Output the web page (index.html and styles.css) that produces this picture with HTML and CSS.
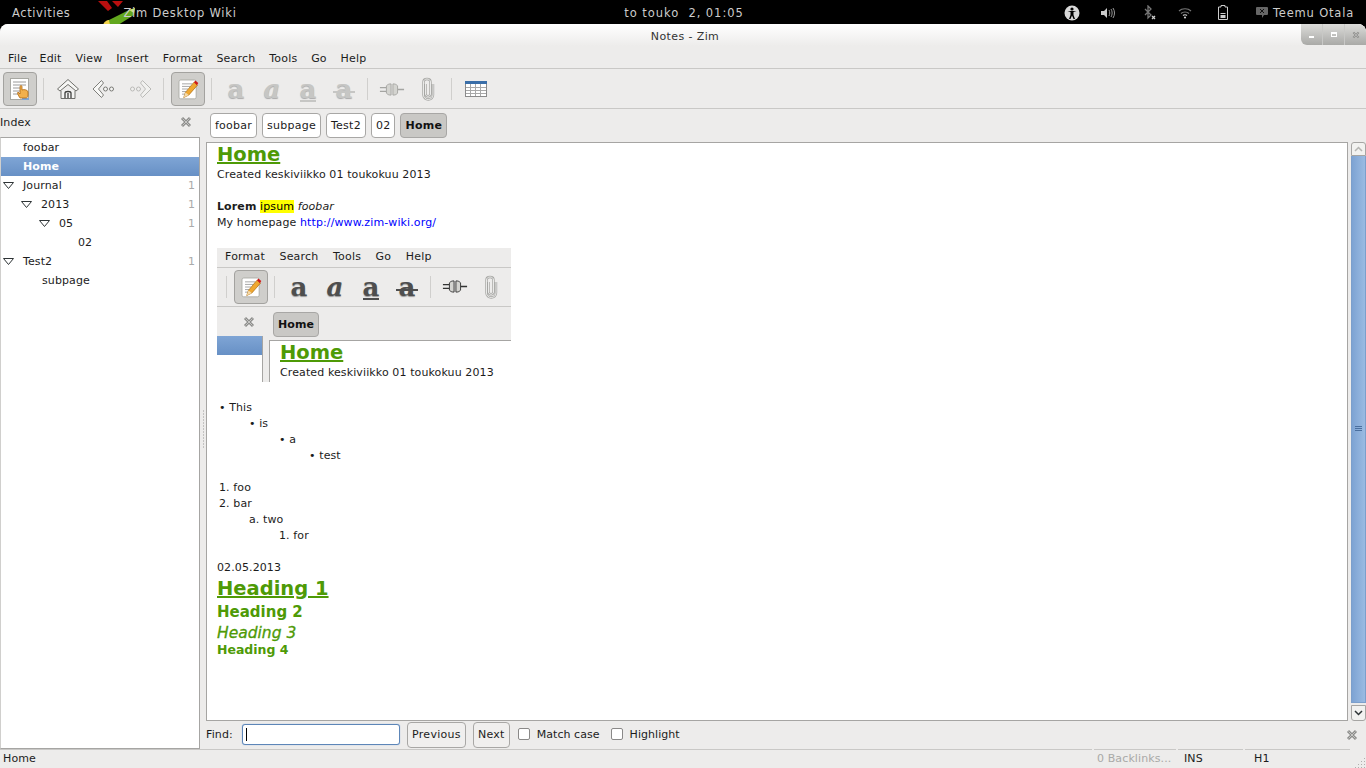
FILE: index.html
```html
<!DOCTYPE html>
<html lang="en">

<head>
    <meta charset="UTF-8">
    <title>Notes - Zim</title>
    <link rel="stylesheet" href="styles.css">
</head>

<body>
    <svg class="defs" width="0" height="0">
        <symbol id="i-edit" viewBox="0 0 28 28">
            <rect x="3.500" y="3.500" width="20" height="22" rx="2" fill="#fff" stroke="#a9a9a3"/>
            <path d="M7 8h12M7 11h10M7 14h7M7 17h5M7 20h4" stroke="#9a9a9a"/>
            <path d="M9 24l2-6L21 6l4 3.500L15 21z" fill="#f0a830" stroke="#a86a10" stroke-width=".8"/>
            <path d="M9 24l2-6 4 3z" fill="#f4d9a8"/>
            <path d="M21 6l1.500-2 3.500 3-1.500 2.500z" fill="#d01818"/>
        </symbol>
        <symbol id="i-plug" viewBox="0 0 28 16">
            <path d="M1 6h7M1 10h7M20 8h7" stroke="currentColor" stroke-width="1.500"/>
            <path d="M8 4c2-2 3-2 5-2v12c-2 0-3 0-5-2z" fill="#d4d4d0" stroke="currentColor"/>
            <path d="M20 4c-2-2-3-2-5-2v12c2 0 3 0 5-2z" fill="#d4d4d0" stroke="currentColor"/>
        </symbol>
        <symbol id="i-clip" viewBox="0 0 16 24">
            <path d="M5.500 7v10c0 3 5 3 5 0V5c0-4-7-4-7 0v13c0 6 9.500 6 9.500 0V7" fill="none" stroke="currentColor" stroke-width="2.400"/>
            <path d="M5.500 7v10c0 3 5 3 5 0V5c0-4-7-4-7 0v13c0 6 9.500 6 9.500 0V7" fill="none" stroke="#f2f2f0" stroke-width=".9"/>
        </symbol>
        <symbol id="i-close" viewBox="0 0 12 12">
            <path d="M2 2l8 8M10 2l-8 8" stroke="#8d8d8b" stroke-width="3"/>
            <path d="M2.500 2.500l7 7M9.500 2.500l-7 7" stroke="#c4c4c2"/>
        </symbol>
        <symbol id="i-down" viewBox="0 0 14 10">
            <path d="M1.500 1.500h10l-5 6z" fill="#fff" stroke="#2e3436"/>
        </symbol>
    </svg>

    <div class="shell">
        <div class="shell-left">
            <span class="activities">Activities</span>
            <span class="app-menu">
                <svg class="app-logo" width="46" height="24" viewBox="0 0 46 24">
                    <path d="M2 0l10 10 4-3-5-7zM16 0l6 6 5-6z" fill="#b80f0f"/>
                    <path d="M7 24c1-3 3-5 7-5l3 5z" fill="#f1d24a"/>
                    <path d="M14 24l-1-5L33 9l6-2-1 7-16 10z" fill="#62a81e"/>
                    <path d="M33 9l6-2-1 5z" fill="#c6e07c"/>
                </svg>
                <span class="app-name">Zim Desktop Wiki</span>
            </span>
        </div>
        <div class="clock">to touko  2, 01:05</div>
        <div class="shell-right">
            <svg width="16" height="16" viewBox="0 0 16 16" class="tray-a">
                <circle cx="8" cy="8" r="7.500" fill="#d8d8d8"/>
                <circle cx="8" cy="4" r="1.600" fill="#000"/>
                <path d="M3.500 6l3 1v3L5 14h1.500L8 10.500 9.500 14H11L9.500 10V7l3-1z" fill="#000"/>
            </svg>
            <svg width="14" height="12" viewBox="0 0 14 12" class="tray-b">
                <path d="M0 4h3l3-3v10L3 8H0z" fill="#ccc"/>
                <path d="M8 3c1 2 1 4 0 6M10 2c1.500 2 1.500 6 0 8M12 1c2 3 2 7 0 10" fill="none" stroke="#999"/>
            </svg>
            <svg width="12" height="16" viewBox="0 0 12 16" class="tray-c">
                <path d="M1 4l6 6-3 3V1l3 3-6 6" fill="none" stroke="#777" stroke-width="1.300"/>
                <path d="M8 11l3 3M11 11l-3 3" stroke="#ccc" stroke-width="1.300"/>
            </svg>
            <svg width="14" height="12" viewBox="0 0 14 12" class="tray-d">
                <path d="M1 4c3-3 9-3 12 0M3 6.500c2-2 6-2 8 0" fill="none" stroke="#777" stroke-width="1.200"/>
                <path d="M5 8.500c1-1 3-1 4 0" fill="none" stroke="#ccc" stroke-width="1.200"/>
                <circle cx="7" cy="10.500" r="1.100" fill="#ccc"/>
            </svg>
            <svg width="10" height="15" viewBox="0 0 10 15" class="tray-e">
                <path d="M3 .5h4v1.500h2.500v12.500h-9V2H3z" fill="none" stroke="#ccc"/>
                <path d="M2.500 8h5v1h-5zM2.500 10h5v3h-5z" fill="#ccc"/>
            </svg>
            <svg width="12" height="11" viewBox="0 0 12 11" class="tray-f">
                <path d="M1 0h10a1 1 0 0 1 1 1v6a1 1 0 0 1-1 1H8l-2 3V8H1a1 1 0 0 1-1-1V1a1 1 0 0 1 1-1z" fill="#666"/>
                <path d="M4 2l4 4M8 2L4 6" stroke="#111"/>
            </svg>
            <span class="user">Teemu Otala</span>
        </div>
    </div>

    <div class="window">
        <div class="titlebar">
            Notes - Zim
            <div class="win-buttons">
                <span class="win-btn"><i class="min"></i></span>
                <span class="win-btn"><i class="max"></i></span>
                <span class="win-btn"><svg width="8" height="8"><use href="#i-close"/></svg></span>
            </div>
        </div>

        <div class="menubar">
            <span>File</span><span>Edit</span><span>View</span><span>Insert</span><span>Format</span><span>Search</span><span>Tools</span><span>Go</span><span>Help</span>
        </div>

        <div class="toolbar">
            <div class="tool on">
                <svg width="26" height="26" viewBox="0 0 26 26">
                    <rect x="3.500" y="2.500" width="18" height="21" fill="#fff" stroke="#a8a8a2"/>
                    <path d="M6 6h13M6 9h13M6 12h9M6 15h7M6 18h6" stroke="#9a9a9a"/>
                    <path d="M15 24h7v-2h-7z" fill="#7ea6d8"/>
                    <path d="M13 22c-2-3-3-5-2-6l2 2v-7c0-2 2-2 2 0v3c2-1 6 0 6 2v3c0 2-1 3-2 3z" fill="#f2b04c" stroke="#b06a14" stroke-width=".8"/>
                </svg>
            </div>
            <span class="sep"></span>
            <div class="tool">
                <svg width="22" height="22" viewBox="0 0 22 22">
                    <path d="M.5 11L11 1.500 21.500 11 19 13l-8-6.500L3 13z" fill="#f6f6f4" stroke="#6e6e6a"/>
                    <path d="M4 12.500v8h14v-8" fill="#f4f4f2" stroke="#6e6e6a"/>
                    <path d="M8 20v-5c0-2 6-2 6 0v5M11 15v5" fill="none" stroke="#3f3f3d" stroke-width="1.300"/>
                </svg>
            </div>
            <div class="tool">
                <svg width="24" height="20" viewBox="0 0 24 20">
                    <path d="M9.500 1.500L1 10l8.500 8.500 2-2.500L6.500 10l5-6z" fill="#f8f8f6" stroke="#7e7e7a"/>
                    <circle cx="13.500" cy="10" r="2" fill="#f4f4f2" stroke="#7a7a76"/>
                    <circle cx="19.500" cy="10" r="2" fill="#f4f4f2" stroke="#7a7a76"/>
                </svg>
            </div>
            <div class="tool faded">
                <svg width="24" height="20" viewBox="0 0 24 20">
                    <path d="M14.500 1.500L23 10l-8.500 8.500-2-2.500 5-6-5-6z" fill="#f8f8f6" stroke="#7e7e7a"/>
                    <circle cx="10.500" cy="10" r="2" fill="#f4f4f2" stroke="#7a7a76"/>
                    <circle cx="4.500" cy="10" r="2" fill="#f4f4f2" stroke="#7a7a76"/>
                </svg>
            </div>
            <span class="sep"></span>
            <div class="tool on"><svg width="24" height="26"><use href="#i-edit"/></svg></div>
            <span class="sep"></span>
            <div class="tool"><span class="fmt off">a</span></div>
            <div class="tool"><span class="fmt off ital">a</span></div>
            <div class="tool"><span class="fmt off under">a</span></div>
            <div class="tool"><span class="fmt off strike">a</span></div>
            <span class="sep"></span>
            <div class="tool off-icon"><svg width="26" height="15"><use href="#i-plug"/></svg></div>
            <div class="tool off-icon"><svg width="16" height="24"><use href="#i-clip"/></svg></div>
            <span class="sep"></span>
            <div class="tool">
                <svg width="24" height="18" viewBox="0 0 24 18">
                    <rect x="1.500" y="1.500" width="21" height="15" fill="#fff" stroke="#8a8a8a"/>
                    <rect x="1" y="1" width="22" height="3" fill="#3a6ea8"/>
                    <path d="M2 7.500h20M2 10.500h20M2 13.500h20M6.500 4v12M11.500 4v12M16.500 4v12" stroke="#a8a8a8"/>
                </svg>
            </div>
        </div>

        <div class="main">
            <div class="side">
                <div class="side-head">
                    <span>Index</span>
                    <svg width="12" height="12"><use href="#i-close"/></svg>
                </div>
                <div class="tree">
                    <div class="row"><span class="name d1">foobar</span></div>
                    <div class="row sel"><span class="name d1">Home</span></div>
                    <div class="row"><svg class="arrow d0" width="14" height="10"><use href="#i-down"/></svg><span class="name">Journal</span><span class="count">1</span></div>
                    <div class="row"><svg class="arrow d2" width="14" height="10"><use href="#i-down"/></svg><span class="name">2013</span><span class="count">1</span></div>
                    <div class="row"><svg class="arrow d3" width="14" height="10"><use href="#i-down"/></svg><span class="name">05</span><span class="count">1</span></div>
                    <div class="row"><span class="name d4">02</span></div>
                    <div class="row"><svg class="arrow d0" width="14" height="10"><use href="#i-down"/></svg><span class="name">Test2</span><span class="count">1</span></div>
                    <div class="row"><span class="name d5">subpage</span></div>
                </div>
            </div>
            <div class="handle"></div>
            <div class="right">
                <div class="tabs">
                    <span class="tab">foobar</span>
                    <span class="tab">subpage</span>
                    <span class="tab">Test2</span>
                    <span class="tab">02</span>
                    <span class="tab cur">Home</span>
                </div>
                <div class="pane">
                    <div class="editor">
                        <h1 class="h-page">Home</h1>
                        <p>Created keskiviikko 01 toukokuu 2013</p>
                        <p>&nbsp;</p>
                        <p><b>Lorem</b> <mark>ipsum</mark> <em>foobar</em></p>
                        <p>My homepage <a href="#">http://www.zim-wiki.org/</a></p>

                        <div class="shot">
                            <div class="shot-menu"><span>Format</span><span>Search</span><span>Tools</span><span>Go</span><span>Help</span></div>
                            <div class="shot-tools">
                                <span class="sep shot-sep"></span>
                                <div class="tool on"><svg width="24" height="26"><use href="#i-edit"/></svg></div>
                                <span class="sep"></span>
                                <div class="tool"><span class="fmt">a</span></div>
                                <div class="tool"><span class="fmt ital">a</span></div>
                                <div class="tool"><span class="fmt under">a</span></div>
                                <div class="tool"><span class="fmt strike">a</span></div>
                                <span class="sep"></span>
                                <div class="tool dark-icon"><svg width="26" height="15"><use href="#i-plug"/></svg></div>
                                <div class="tool off-icon"><svg width="16" height="24"><use href="#i-clip"/></svg></div>
                            </div>
                            <div class="shot-tabs">
                                <svg class="shot-close" width="12" height="12"><use href="#i-close"/></svg>
                                <span class="tab cur">Home</span>
                            </div>
                            <div class="shot-body">
                                <div class="shot-side"><div class="shot-sel"></div></div>
                                <div class="shot-page">
                                    <h1 class="h-page">Home</h1>
                                    <p>Created keskiviikko 01 toukokuu 2013</p>
                                </div>
                            </div>
                        </div>

                        <p>&nbsp;</p>
                        <p class="li0">• This</p>
                        <p class="li1">• is</p>
                        <p class="li2">• a</p>
                        <p class="li3">• test</p>
                        <p>&nbsp;</p>
                        <p class="num0">1. foo</p>
                        <p class="num0">2. bar</p>
                        <p class="num1">a. two</p>
                        <p class="num2">1. for</p>
                        <p>&nbsp;</p>
                        <p>02.05.2013</p>
                        <h1 class="h1">Heading 1</h1>
                        <h2 class="h2">Heading 2</h2>
                        <h3 class="h3">Heading 3</h3>
                        <h4 class="h4">Heading 4</h4>
                    </div>
                    <div class="scrollbar">
                        <span class="sb-btn">
                            <svg width="9" height="6" viewBox="0 0 9 6"><path d="M1 5l3.500-3.500L8 5" fill="none" stroke="#b5b5b2" stroke-width="1.500"/></svg>
                        </span>
                        <div class="sb-thumb"><i></i><i></i><i></i></div>
                        <span class="sb-btn down">
                            <svg width="9" height="6" viewBox="0 0 9 6"><path d="M1 1l3.500 3.500L8 1" fill="none" stroke="#2e3436" stroke-width="1.500"/></svg>
                        </span>
                    </div>
                </div>
                <div class="findbar">
                    <span class="find-label">Find:</span>
                    <span class="find-input"><i></i></span>
                    <span class="btn">Previous</span>
                    <span class="btn">Next</span>
                    <span class="check"></span><span class="check-label">Match case</span>
                    <span class="check"></span><span class="check-label">Highlight</span>
                    <svg class="find-close" width="12" height="12"><use href="#i-close"/></svg>
                </div>
            </div>
        </div>

        <div class="statusbar">
            <span class="st st-page">Home</span>
            <span class="st st-back">0 Backlinks...</span>
            <span class="st st-ins">INS</span>
            <span class="st st-style">H1</span>
            <svg class="grip" width="11" height="11" viewBox="0 0 11 11">
                <path d="M9 1h1v1H9zM6 4h1v1H6zM9 4h1v1H9zM3 7h1v1H3zM6 7h1v1H6zM9 7h1v1H9zM0 10h1v1H0zM3 10h1v1H3zM6 10h1v1H6zM9 10h1v1H9z" fill="#b0afad"/>
            </svg>
        </div>
    </div>
</body>

</html>
```

FILE: styles.css
```css
* {
    padding: 0;
    margin: 0;
    box-sizing: border-box;
}

html,
body {
    height: 100%;
    overflow: hidden;
}

body {
    display: flex;
    flex-direction: column;
    background-color: #000;
    font-family: "DejaVu Sans", sans-serif;
    font-size: 11px;
    letter-spacing: .11px;
    color: #1c1c1c;
}

.defs {
    position: absolute;
}

/* shell panel */
.shell {
    display: grid;
    grid-template-columns: 1fr auto 1fr;
    align-items: center;
    flex: none;
    height: 24px;
    padding-top: 1px;
    background-color: #000;
    color: #ccc;
    font-size: 11.5px;
    font-weight: 500;
    letter-spacing: .6px;
}

.shell-left,
.shell-right {
    display: flex;
    align-items: center;
    height: 23px;
}

.activities {
    margin-left: 12px;
}

.app-menu {
    position: relative;
    margin-left: 53px;
    letter-spacing: .75px;
}

.app-name {
    position: relative;
}

.app-logo {
    position: absolute;
    left: -27px;
    top: -5px;
}

.clock {
    margin-left: 2px;
    white-space: pre;
    letter-spacing: .95px;
}

.shell-right {
    justify-content: flex-end;
    padding-right: 12px;
}

.user {
    letter-spacing: .8px;
}

.tray-a {
    margin-right: 21px;
}

.tray-b {
    margin-right: 29px;
}

.tray-c {
    margin-right: 22px;
}

.tray-d {
    margin-right: 26px;
}

.tray-e {
    margin-right: 28px;
}

.tray-f {
    margin-right: 5px;
}

/* window */
.window {
    display: flex;
    flex-direction: column;
    flex: 1;
    min-height: 0;
    border-radius: 8px 8px 0 0;
    background-color: #edeceb;
}

.titlebar {
    position: relative;
    flex: none;
    height: 22px;
    padding-left: 4px;
    line-height: 26px;
    text-align: center;
    border-radius: 8px 8px 0 0;
    background: linear-gradient(#fff, #edeceb);
    color: #333;
    letter-spacing: .4px;
}

.win-buttons {
    position: absolute;
    right: 0;
    top: 0;
    display: flex;
    width: 65px;
    height: 21px;
    border-radius: 0 8px 0 6px;
    overflow: hidden;
    background: linear-gradient(#dcdcda, #a9a9a6);
}

.win-btn {
    display: flex;
    flex: 1;
    align-items: center;
    justify-content: center;
    border-left: 1px solid #c8c8c6;
}

.win-btn:first-child {
    border-left: 0;
}

.win-btn i {
    display: block;
    background-color: #fff;
}

.win-btn .min {
    width: 5px;
    height: 2px;
    margin-top: 5px;
}

.win-btn .max {
    width: 6px;
    height: 5px;
    border: 1px solid #fff;
    border-top-width: 2px;
    background-color: transparent;
}

.menubar {
    display: flex;
    flex: none;
    gap: 13.800px;
    align-items: center;
    height: 23px;
    padding-left: 8px;
    padding-top: 2px;
    border-bottom: 1px solid #c9c8c6;
    letter-spacing: .2px;
}

.menubar span:first-child {
    margin-right: -1.500px;
}

.toolbar {
    display: flex;
    flex: none;
    align-items: center;
    height: 40px;
    padding: 1px 0 0 2px;
    border-bottom: 1px solid #c9c8c6;
}

.tool {
    display: flex;
    flex: none;
    align-items: center;
    justify-content: center;
    width: 36px;
    height: 34px;
}

.tool.on {
    width: 34px;
    margin: 0 1px;
    border: 1px solid #a3a29f;
    border-radius: 4px;
    background-color: #cfcecb;
}

.faded svg {
    opacity: .45;
}

.sep {
    flex: none;
    width: 12px;
    height: 22px;
    background: linear-gradient(#d0cfcd, #d0cfcd) 5px 0 / 1px 100% no-repeat;
}

.fmt {
    position: relative;
    font-family: "DejaVu Serif", serif;
    font-size: 26px;
    font-weight: bold;
    line-height: 22px;
    color: #4e4e4e;
    text-shadow: 0 1px 1px #999;
}

.fmt.off {
    color: #c6c6c4;
    text-shadow: 0 1px 1px #aaa;
}

.fmt.ital {
    font-style: italic;
}

.fmt.under::after,
.fmt.strike::after {
    content: "";
    position: absolute;
    left: 0;
    right: 0;
    height: 2px;
    background-color: currentColor;
}

.fmt.under::after {
    bottom: -2px;
}

.fmt.strike::after {
    left: -3px;
    right: -3px;
    bottom: 7px;
}

.off-icon {
    color: #a5a5a2;
}

.dark-icon {
    color: #333;
}

/* main area */
.main {
    display: flex;
    flex: 1;
    min-height: 0;
}

.side {
    display: flex;
    flex-direction: column;
    flex: none;
    width: 200px;
}

.side-head {
    display: flex;
    flex: none;
    align-items: center;
    justify-content: space-between;
    height: 28px;
    padding: 0 8px 2px 0;
}

.tree {
    flex: 1;
    border: 1px solid #a6a5a3;
    border-left-color: #d0cfcd;
    background-color: #fff;
}

.row {
    display: flex;
    align-items: center;
    height: 19px;
}

.row.sel {
    background: linear-gradient(#7fa5d5, #6790c5);
    color: #fff;
    font-weight: bold;
}

.arrow {
    flex: none;
    margin-right: 7px;
}

.name {
    flex: 1;
}

.count {
    margin-right: 4px;
    color: #aaa;
}

.d0 {
    margin-left: 1px;
}

.d1 {
    margin-left: 22px;
}

.d2 {
    margin-left: 19px;
}

.d3 {
    margin-left: 37px;
}

.d4 {
    margin-left: 77px;
}

.d5 {
    margin-left: 41px;
}

.handle {
    flex: none;
    width: 6px;
    background: radial-gradient(#9a9997 .5px, transparent 1px) center / 3px 3px repeat-y;
    mask-image: linear-gradient(transparent 0, transparent 47%, #000 47%, #000 53%, transparent 53%);
}

.right {
    display: flex;
    flex-direction: column;
    flex: 1;
    min-width: 0;
}

.tabs {
    display: flex;
    flex: none;
    gap: 5px;
    height: 33px;
    padding: 4px 0 0 4px;
    letter-spacing: .25px;
}

.tab {
    height: 25px;
    padding: 0 4px;
    line-height: 23px;
    border: 1px solid #a8a7a5;
    border-radius: 4px;
    background-color: #fff;
}

.tab.cur {
    background-color: #c9c8c5;
    font-weight: bold;
    color: #111;
}

.pane {
    display: flex;
    flex: 1;
    min-height: 0;
}

.editor {
    flex: 1;
    overflow: hidden;
    padding: 1px 0 0 10px;
    border: 1px solid #a6a5a3;
    background-color: #fff;
    line-height: 16px;
}

.editor p {
    height: 16px;
    white-space: pre;
}

.h-page {
    height: 23px;
    font-size: 19.500px;
    line-height: 22px;
    letter-spacing: 0;
    color: #4e9a06;
    text-decoration: underline;
    text-decoration-thickness: 2px;
}

mark {
    background-color: #ff0;
}

a {
    color: #00f;
    text-decoration: none;
}

/* screenshot pasted into the page */
.shot {
    width: 294px;
    height: 134px;
    margin: 17px 0 2px;
    overflow: hidden;
    background-color: #edeceb;
}

.shot-menu {
    display: flex;
    gap: 14.500px;
    align-items: center;
    height: 20px;
    padding: 0 0 1px 8px;
    border-bottom: 1px solid #c9c8c6;
    letter-spacing: .2px;
}

.shot-tools {
    display: flex;
    align-items: center;
    height: 39px;
    padding-bottom: 1px;
    border-bottom: 1px solid #c9c8c6;
}

.shot-sep {
    width: 16px;
    background-position: 9px 0;
}

.shot-tabs {
    display: flex;
    align-items: center;
    height: 33px;
    padding: 2px 0 0 26px;
    gap: 18px;
}

.shot-close {
    margin-bottom: 5px;
}

.shot-body {
    display: flex;
    height: 42px;
}

.shot-side {
    width: 46px;
    margin-top: -4px;
    border-right: 1px solid #a6a5a3;
    background-color: #fff;
}

.shot-sel {
    height: 19px;
    background: linear-gradient(#7fa5d5, #6790c5);
}

.shot-page {
    flex: 1;
    margin-left: 6px;
    padding: 1px 0 0 10px;
    border: 1px solid #a6a5a3;
    border-right: 0;
    border-bottom: 0;
    background-color: #fff;
}

.li0 {
    padding-left: 2px;
}

.li1 {
    padding-left: 32px;
}

.li2 {
    padding-left: 62px;
}

.li3 {
    padding-left: 92px;
}

.num0 {
    padding-left: 2px;
}

.num1 {
    padding-left: 32px;
}

.num2 {
    padding-left: 62px;
}

.h1,
.h2,
.h3,
.h4 {
    color: #4e9a06;
}

.h1 {
    height: 26px;
    font-size: 19.500px;
    line-height: 25px;
    letter-spacing: 0;
    text-decoration: underline;
    text-decoration-thickness: 2px;
}

.h2 {
    height: 20px;
    font-size: 15px;
    line-height: 20px;
    letter-spacing: 0;
    font-weight: 600;
}

.h3 {
    height: 20px;
    font-size: 15.500px;
    line-height: 22px;
    letter-spacing: 0;
    font-style: italic;
    font-weight: normal;
    -webkit-text-stroke: .3px #4e9a06;
}

.h4 {
    height: 16px;
    font-size: 12.500px;
    line-height: 16px;
    letter-spacing: 0;
}

.scrollbar {
    display: flex;
    flex-direction: column;
    flex: none;
    width: 15px;
    margin-left: 3px;
}

.sb-btn {
    display: flex;
    align-items: center;
    justify-content: center;
    flex: none;
    height: 14px;
    border: 1px solid #a6a5a3;
    border-radius: 3px 3px 0 0;
    background-color: #f2f2f0;
}

.sb-btn.down {
    height: 16px;
    margin-top: 2px;
    border-radius: 0 0 3px 3px;
}

.sb-thumb {
    display: flex;
    flex: 1;
    flex-direction: column;
    gap: 1px;
    align-items: center;
    justify-content: center;
    padding-bottom: 2px;
    border: 1px solid #7c9fcb;
    border-top: 0;
    background: linear-gradient(90deg, #7da3d3, #9bbbe2);
}

.sb-thumb i {
    width: 7px;
    height: 1px;
    background-color: #4a6f9f;
}

.findbar {
    display: flex;
    flex: none;
    align-items: center;
    height: 28px;
}

.find-label {
    width: 36px;
    margin-bottom: 2px;
}

.find-input {
    display: flex;
    align-items: center;
    width: 158px;
    height: 21px;
    margin-bottom: 2px;
    padding-left: 3px;
    border: 1px solid #5d86b8;
    border-radius: 3px;
    background-color: #fff;
    box-shadow: 0 0 1px #7fa5d5;
}

.find-input i {
    width: 1px;
    height: 13px;
    background-color: #000;
}

.btn {
    height: 26px;
    margin-left: 7px;
    padding: 0 4px;
    line-height: 24px;
    border: 1px solid #a8a7a5;
    border-radius: 4px;
    background-color: #f0efee;
    letter-spacing: .3px;
}

.check {
    width: 12px;
    height: 12px;
    margin: 0 7px 2px 8px;
    border: 1px solid #8a8988;
    border-radius: 2px;
    background-color: #fff;
}

.check-label {
    margin: 0 3px 2px 0;
    letter-spacing: .05px;
}

.find-close {
    margin-left: auto;
    margin-right: 8px;
}

.statusbar {
    position: relative;
    display: flex;
    flex: none;
    align-items: center;
    gap: 2px;
    height: 19px;
}

.st {
    height: 19px;
    line-height: 18px;
    padding-left: 3px;
    border-top: 1px solid #c9c8c6;
}

.st-page {
    width: 1092px;
}

.st-back {
    width: 82px;
    color: #a9a9a7;
}

.st-ins {
    width: 65px;
    padding-left: 6px;
}

.st-style {
    width: 105px;
    padding-left: 9px;
}

.grip {
    position: absolute;
    right: 0;
    bottom: 0;
}
```
